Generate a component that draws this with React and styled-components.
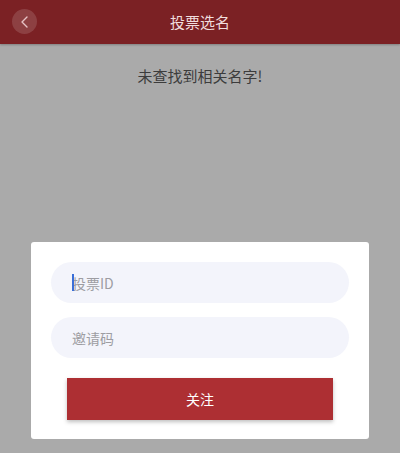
import React from 'react'
import styled, { createGlobalStyle } from 'styled-components'

const GlobalStyle = createGlobalStyle`
  html, body {
    margin: 0;
    padding: 0;
    background: #aaaaaa;
    font-family: "Noto Sans CJK SC", "Noto Sans", sans-serif;
  }
  * { box-sizing: border-box; }
`

const Page = styled.div`
  width: 400px;
  height: 453px;
  background: #aaaaaa;
  display: flex;
  flex-direction: column;
  overflow: hidden;
`

const Header = styled.div`
  height: 44px;
  background: #7b2124;
  display: flex;
  align-items: center;
  position: relative;
  box-shadow: 0 1px 2px rgba(0, 0, 0, 0.25);
`

const BackButton = styled.button`
  position: absolute;
  left: 12px;
  top: 9px;
  width: 25px;
  height: 25px;
  border-radius: 50%;
  border: 0;
  padding: 0;
  background: rgba(255, 255, 255, 0.14);
  display: flex;
  align-items: center;
  justify-content: center;
`

const Title = styled.h1`
  flex: 1;
  margin: 0;
  text-align: center;
  font-size: 15px;
  font-weight: 400;
  color: #f0dede;
  line-height: 44px;
`

const Message = styled.p`
  margin: 20px 0 0;
  text-align: center;
  font-size: 15px;
  color: #3c3c3c;
  line-height: 24px;
`

const Card = styled.div`
  margin: 154px 31px 0;
  background: #fff;
  border-radius: 3px;
  padding: 20px 20px 19px;
  display: flex;
  flex-direction: column;
  gap: 14px;
`

const Field = styled.div`
  position: relative;
`

const Input = styled.input`
  width: 100%;
  height: 41px;
  border: 0;
  border-radius: 21px;
  background: #f3f4fb;
  padding: 0 21px;
  font-family: inherit;
  font-size: 14px;
  color: #333;
  outline: none;
  &::placeholder { color: #9d9da2; }
`

const Caret = styled.span`
  position: absolute;
  left: 21px;
  top: 12px;
  width: 2px;
  height: 17px;
  background: #3a6fd8;
`

const SubmitButton = styled.button`
  margin: 6px 16px 0;
  height: 42px;
  border: 0;
  background: #ad2f33;
  color: #fff;
  font-family: inherit;
  font-size: 14px;
  box-shadow: 0 2px 4px rgba(0, 0, 0, 0.25);
`

const App = () => {
  return (
    <Page>
      <GlobalStyle />
      <Header>
        <BackButton aria-label="back">
          <svg width="12" height="14" viewBox="0 0 12 14">
            <path d="M8 2 L3 7 L8 12" fill="none" stroke="#e6c3c5" strokeWidth="1.4" strokeLinecap="round" strokeLinejoin="round" />
          </svg>
        </BackButton>
        <Title>投票选名</Title>
      </Header>
      <Message>未查找到相关名字!</Message>
      <Card>
        <Field>
          <Input placeholder="投票ID" />
          <Caret />
        </Field>
        <Field>
          <Input placeholder="邀请码" />
        </Field>
        <SubmitButton>关注</SubmitButton>
      </Card>
    </Page>
  )
}

export default App
